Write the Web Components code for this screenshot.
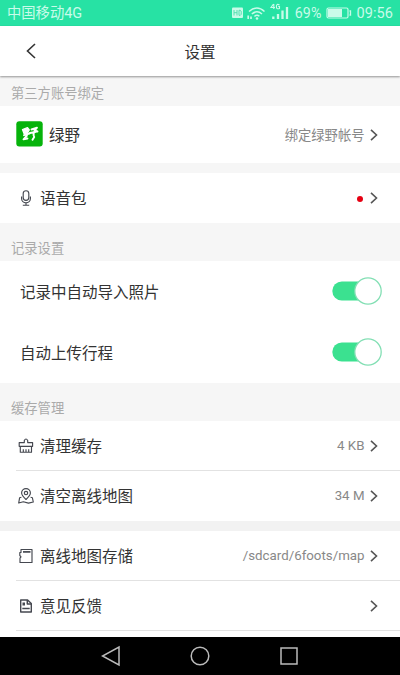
<!DOCTYPE html>
<html lang="zh-CN">
<head>
<meta charset="utf-8">
<title>设置</title>
<style>
html,body{margin:0;height:100%;overflow:hidden}
body{font-family:Roboto,"Noto Sans CJK SC",sans-serif;color:#333;background:#f6f6f6}
</style>
</head>
<body>
<settings-screen></settings-screen>
<script>
const define = (name, html, setup) => {
  const t = document.createElement('template');
  t.innerHTML = html;
  customElements.define(name, class extends HTMLElement {
    connectedCallback() {
      if (this.shadowRoot) return;
      this.attachShadow({mode: 'open'}).append(t.content.cloneNode(true));
      if (setup) setup(this, this.shadowRoot);
    }
  });
};

const icons = {
  mic: '<rect x="5.2" y=".7" width="5.6" height="9.6" rx="2.8"/><path d="M3.6 6.5v2a4.4 4.4 0 0 0 8.8 0v-2M8 13v2M4.8 15.2h6.4"/>',
  brush: '<path d="M6.3 4.600V2.500Q8 -.6 9.700 2.500V4.600H14.600V8.300H1.200V4.600ZM2.300 8.300V14.200H13.500V8.300M5.300 14V11.200M8 14V11.200M10.700 14V11.200"/>',
  map: '<path d="M8 11.500C5.400 9 3.600 7.200 3.600 5a4.400 4.400 0 0 1 8.800 0C12.400 7.200 10.600 9 8 11.500Z"/><circle cx="8" cy="5" r="1.700"/><path d="M3.400 9.200L1.600 9.800 .7 15 5.300 13.800 10.500 15.100 15.300 14 14.400 9.800 12.600 9.200"/>',
  card: '<path d="M3 1.500H14V14.500H2V10.200L3 8.800 1.800 7.500V4.500H3Z"/><path d="M5 3.900H12.500" stroke-width="1.700"/>',
  note: '<path d="M2.700 2H9.600L13.300 5.500V14H2.700Z" stroke-width="1.400"/><path d="M9.300 2V6H13" stroke-width="1.500"/><path d="M4.500 5.300H7M4.500 6.800H7M4.300 10.500H11.700" stroke-width="1.400"/>'
};

define('app-icon', `<style>:host{display:block;width:16px;height:16px}svg{display:block;fill:none;stroke:#454850;stroke-width:1.150;stroke-linejoin:round}</style><svg width="16" height="16" viewBox="0 0 16 16"></svg>`,
  (el, r) => { r.querySelector('svg').innerHTML = icons[el.getAttribute('name')]; });

define('brand-badge', `<style>:host{display:block;width:27px;height:26px;margin-top:-1px}svg{display:block}</style>
<svg width="27" height="26" viewBox="0 0 27 26"><rect x=".3" y=".3" width="26.400" height="25.200" rx="3" fill="#06b30b"/>
<g fill="none" stroke="#fff" stroke-linejoin="round" stroke-linecap="round"><path d="M6.500 8.500 11.500 6.700 13.300 9 11.500 12 8 12.500Z" fill="#fff" stroke-width="1.300"/><path d="M10.500 11 11 14.500 7.500 18.300 11.500 17.500M8 14.200 13.500 12.500" stroke-width="1.900"/><path d="M15.500 8.500 21 6.700 18.500 9.500 21.500 10.500M14 12 20 10.800M18.300 10.500 17.500 14 18.200 16 16.500 18.800" stroke-width="1.900"/></g></svg>`);

define('status-bar', `<style>
:host{display:flex;align-items:center;height:25.500px;box-sizing:border-box;padding:1px 7px 0;background:#27e2a4;color:#c9fbe9;font-size:14.500px;line-height:24px}
.c{flex:1;font-size:14.300px;white-space:nowrap}.c b{font-weight:400;font-size:14.500px}
svg{display:block;fill:none;stroke:#c9fbe9}
.t{letter-spacing:.1px;padding-top:1px}.p{letter-spacing:.1px;font-size:14.200px;margin-left:6px}.bat{margin:0 4px 0 5px}
</style><span class="c">中国移动<b>4G</b></span>
<svg width="57" height="22" viewBox="232 2 57 22"><rect x="232" y="7.500" width="11" height="10.500" rx="1" fill="#c9fbe9" stroke="none"/><path d="M234 10v5.500M237 10v5.500M234 12.700h3M239 10.300v5h1.300q1-.3 1-2.500t-1-2.500z" stroke="#55dfb1"/>
<path d="M249 11.500q8-7 15.500 0M251.800 14q5.200-4.400 10.200 0M254.400 16.300q2.700-2 5 0" stroke-width="1.500"/><circle cx="257" cy="18.500" r="1.300" fill="#c9fbe9" stroke="none"/><path d="M248.200 15.500v3.500M251 16.500v2.500" stroke-width="1.700"/>
<path d="M273.300 16.500v2.500M278 14v5M282.500 10.500v8.500M287 7v12" stroke-width="2.300"/><path d="M273.500 4 271 7.500h4M273.800 4v5M279.500 5q-3-1.800-3.100 1.500t3.100 1.900v-1.900h-1.300" stroke-width="1.100"/></svg>
<span class="p">69%</span><svg class="bat" width="26" height="14" viewBox="0 0 26 14"><rect x="1" y="2" width="21" height="10" rx="1.500" stroke-width="1.200"/><rect x="2" y="3" width="14" height="8" fill="#c9fbe9" stroke="none"/><path d="M23.500 5h1v4h-1" stroke-width="1.300"/></svg><span class="t">09:56</span>`);

define('title-bar', `<style>
:host{display:grid;grid-template-columns:62px 1fr 62px;align-items:center;height:50.500px;background:#fff;box-shadow:0 1px 2px #0006;position:relative;font-size:15.500px;text-align:center}
svg{margin-left:25px;display:block;fill:none;stroke:#333;stroke-width:1.600}
</style><svg width="12" height="16" viewBox="0 0 12 16"><path d="M10 1 2.500 8 10 15"/></svg><span><slot></slot></span>`);

define('section-title', `<style>:host{display:flex;align-items:flex-end;box-sizing:border-box;background:#f6f6f6;color:#aaa;font-size:13.300px;line-height:20px;padding:0 11px 2px}</style><slot></slot>`);

define('setting-row', `<style>
:host{display:flex;align-items:center;box-sizing:border-box;height:50px;background:#fff;padding:0 22px 0 18px;font-size:15.500px;white-space:nowrap}
:host([tall]){height:57px;padding-left:16px}
:host([line]){background:linear-gradient(#e2e2e2,#e2e2e2) 16px 100%/100% 1px no-repeat #fff}
.l{margin-left:6px;flex:1;padding-bottom:1.500px}.v{font-size:13.300px;color:#888}
.a{display:block;margin-left:5.500px;fill:none;stroke:#555;stroke-width:1.600}
</style><slot name="icon"></slot><span class="l"><slot></slot></span><span class="v"><slot name="value"></slot></span><svg class="a" width="8" height="12" viewBox="0 0 8 12"><path d="M1 .8 6.500 6 1 11.200"/></svg>`);

define('red-dot', `<style>:host{display:block;width:6px;height:6px;border-radius:50%;background:#e60012;margin:2px 2px 0 0}</style>`);

define('toggle-row', `<style>
:host{display:flex;align-items:center;justify-content:space-between;box-sizing:border-box;height:61px;background:#fff;padding:0 18px 0 20px;font-size:15.500px}
svg{display:block}
</style><span><slot></slot></span><svg width="50" height="30" viewBox="0 0 50 30"><rect x=".3" y="5.500" width="42" height="19" rx="9.500" fill="#3be190"/><circle cx="36" cy="15" r="13.200" fill="#fff" stroke="#83dfb4" stroke-width="1.300"/></svg>`);

define('nav-bar', `<style>:host{display:flex;align-items:center;justify-content:center;gap:69px;height:38px;background:#000}svg{display:block;fill:none;stroke:#bbb;stroke-width:1.500}</style>
<svg width="20" height="22" viewBox="0 0 20 22"><path d="M18 2V20L1.500 11Z"/></svg><svg width="20" height="20" viewBox="0 0 20 20"><circle cx="10" cy="10" r="8.800"/></svg><svg width="20" height="20" viewBox="0 0 20 20"><rect x="2" y="2" width="16" height="16"/></svg>`);

define('settings-screen', `<style>
:host{display:flex;flex-direction:column;width:400px;height:675px;overflow:hidden;background:#f6f6f6}
:host>*{flex-shrink:0}
.gap{height:10px;background:#f2f2f2}.fill{flex:1;background:#fff}
</style>
<status-bar></status-bar><title-bar>设置</title-bar>
<section-title style="height:30px">第三方账号绑定</section-title>
<setting-row tall><brand-badge slot="icon"></brand-badge>绿野<span slot="value">绑定绿野帐号</span></setting-row>
<div class="gap" style="background:#f6f6f6"></div>
<setting-row><app-icon slot="icon" name="mic"></app-icon>语音包<red-dot slot="value"></red-dot></setting-row>
<section-title style="height:37.500px">记录设置</section-title>
<toggle-row>记录中自动导入照片</toggle-row><toggle-row>自动上传行程</toggle-row>
<section-title style="height:38px">缓存管理</section-title>
<setting-row line><app-icon slot="icon" name="brush"></app-icon>清理缓存<span slot="value">4 KB</span></setting-row>
<setting-row><app-icon slot="icon" name="map"></app-icon>清空离线地图<span slot="value">34 M</span></setting-row>
<div class="gap"></div>
<setting-row line><app-icon slot="icon" name="card"></app-icon>离线地图存储<span slot="value">/sdcard/6foots/map</span></setting-row>
<setting-row line><app-icon slot="icon" name="note"></app-icon>意见反馈</setting-row>
<div class="fill"></div><nav-bar></nav-bar>`);
</script>
</body>
</html>
